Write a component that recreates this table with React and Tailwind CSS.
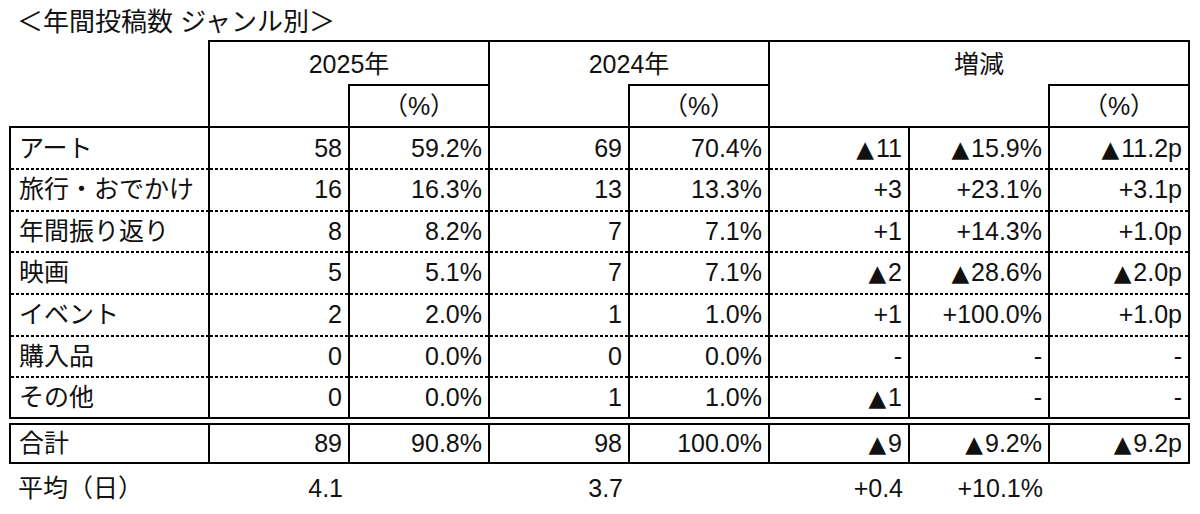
import React from 'react';

// --- Data ---
const rows = [
  ['アート', '58', '59.2%', '69', '70.4%', '▲11', '▲15.9%', '▲11.2p'],
  ['旅行・おでかけ', '16', '16.3%', '13', '13.3%', '+3', '+23.1%', '+3.1p'],
  ['年間振り返り', '8', '8.2%', '7', '7.1%', '+1', '+14.3%', '+1.0p'],
  ['映画', '5', '5.1%', '7', '7.1%', '▲2', '▲28.6%', '▲2.0p'],
  ['イベント', '2', '2.0%', '1', '1.0%', '+1', '+100.0%', '+1.0p'],
  ['購入品', '0', '0.0%', '0', '0.0%', '-', '-', '-'],
  ['その他', '0', '0.0%', '1', '1.0%', '▲1', '-', '-'],
];

// whole-pixel row heights so the rules stay crisp
const rowHeights = ['h-[41px]', 'h-[42px]', 'h-[41px]', 'h-[42px]', 'h-[42px]', 'h-[41px]', 'h-[42px]'];

const total = ['合計', '89', '90.8%', '98', '100.0%', '▲9', '▲9.2%', '▲9.2p'];
const average = ['平均（日）', '4.1', '', '3.7', '', '+0.4', '+10.1%', ''];

// dotted rule between body rows: 3px dash / 2px gap, 2px thick
const dotted = 'bg-[linear-gradient(90deg,#000_3px,transparent_3px)] bg-[length:5px_2px] bg-repeat-x ';

// ▲ (decrease) is drawn a bit larger than Liberation's glyph
const Value = ({ text }) => {
  if (text.startsWith('▲')) {
    return (
      <>
        <span className="font-['DejaVu_Sans'] text-[23px] mr-[2px]">▲</span>
        {text.slice(1)}
      </>
    );
  }
  return text;
};

const App = () => {
  return (
    <div className="w-[1200px] h-[514px] bg-white text-[#111] font-['Liberation_Sans','Noto_Sans_CJK_JP',sans-serif] text-[25px] overflow-hidden">
      {/* Title */}
      <div className="h-[40px] pl-[17px] pt-[7px] leading-[30px] text-[26px]">＜年間投稿数 ジャンル別＞</div>

      <table className="ml-[9px] table-fixed w-[1179px]">
        <colgroup>
          <col className="w-[199px]" />
          {[...Array(7)].map((_, i) => (
            <col key={i} className="w-[140px]" />
          ))}
        </colgroup>
        <thead>
          {/* Year headers */}
          <tr>
            <th rowSpan={2} className="p-0 border-b-2 border-black"></th>
            <th colSpan={2} className="h-[41px] p-0 pt-[4px] font-normal text-center border-t-2 border-x-2 border-black">2025年</th>
            <th colSpan={2} className="h-[41px] p-0 pt-[4px] font-normal text-center border-t-2 border-x-2 border-black">2024年</th>
            <th colSpan={3} className="h-[41px] p-0 pt-[4px] font-normal text-center border-t-2 border-x-2 border-black">増減</th>
          </tr>
          {/* Sub headers */}
          <tr>
            <th className="h-[42px] p-0 border-l-2 border-b-2 border-black"></th>
            <th className="h-[42px] p-0 pt-[2px] font-normal text-center border-2 border-black">（%）</th>
            <th className="h-[42px] p-0 border-l-2 border-b-2 border-black"></th>
            <th className="h-[42px] p-0 pt-[2px] font-normal text-center border-2 border-black">（%）</th>
            <th className="h-[42px] p-0 border-l-2 border-b-2 border-black"></th>
            <th className="h-[42px] p-0 border-b-2 border-black"></th>
            <th className="h-[42px] p-0 pt-[2px] font-normal text-center border-2 border-black">（%）</th>
          </tr>
        </thead>
        <tbody>
          {rows.map((row, r) => (
            <tr key={row[0]}>
              {row.map((cell, c) => (
                <td
                  key={c}
                  className={
                    rowHeights[r] + ' p-0 pt-[2px] leading-none border-x-2 border-black ' +
                    (r > 0 ? dotted : '') +
                    (r === rows.length - 1 ? 'border-b-2 ' : '') +
                    (c === 0 ? 'text-left pl-[8px]' : 'text-right pr-[6px]')
                  }
                >
                  <Value text={cell} />
                </td>
              ))}
            </tr>
          ))}
          {/* gap between body and total (double rule) */}
          <tr>
            <td colSpan={8} className="h-[6px] p-0 text-[0px] leading-none"></td>
          </tr>
          <tr>
            {total.map((cell, c) => (
              <td
                key={c}
                className={
                  'h-[39px] p-0 pt-[1px] leading-none border-2 border-black ' +
                  (c === 0 ? 'text-left pl-[8px]' : 'text-right pr-[6px]')
                }
              >
                <Value text={cell} />
              </td>
            ))}
          </tr>
          <tr>
            {average.map((cell, c) => (
              <td
                key={c}
                className={
                  'h-[50px] p-0 leading-none ' +
                  (c === 0 ? 'text-left pl-[8px]' : 'text-right pr-[6px]')
                }
              >
                {cell}
              </td>
            ))}
          </tr>
        </tbody>
      </table>
    </div>
  );
};

export default App;
